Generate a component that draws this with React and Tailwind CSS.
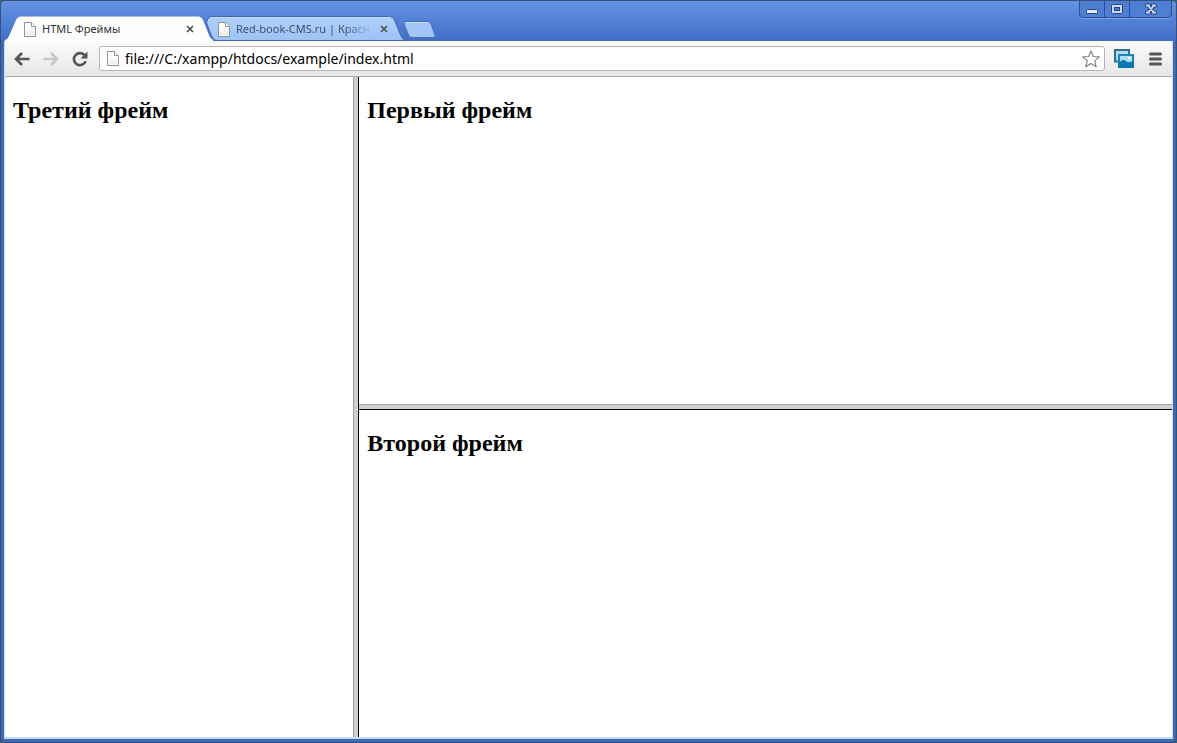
import React from "react";

function PageIcon({ className = "" }) {
  return (
    <svg className={"h-[15px] w-[12px] shrink-0 " + className} viewBox="0 0 12 15" aria-hidden="true">
      <path d="M.5 .5H7.500L11.500 4.500V14.500H.5Z" fill="#fafafa" stroke="#939393" />
      <path d="M7.500 .5V4.500H11.500" fill="#fff" stroke="#939393" />
      <path d="M2 9H10V13H2Z" fill="#efefef" />
    </svg>
  );
}

function CloseIcon() {
  return (
    <svg className="size-[8px]" viewBox="0 0 8 8" aria-hidden="true">
      <path d="M1 1L7 7M7 1L1 7" stroke="#4a4d52" strokeWidth="1.700" />
    </svg>
  );
}

function ActiveTabShape() {
  return (
    <svg className="absolute inset-0 h-full w-full" viewBox="0 0 208 25" preserveAspectRatio="none" aria-hidden="true">
      <path d="M0 25V24Q3 23 4 20L11 4Q12.500 .5 16 .5H193Q196.500 .5 198 4L204 19Q205.500 23 208 24V25Z" fill="#fdfdfe" />
    </svg>
  );
}

function IdleTabShape() {
  return (
    <svg className="absolute inset-0 h-full w-full" viewBox="0 0 204 25" preserveAspectRatio="none" aria-hidden="true">
      <defs>
        <linearGradient id="idleTab" x1="0" y1="0" x2="0" y2="1">
          <stop offset="0" stopColor="#b1d1fb" />
          <stop offset="1" stopColor="#9cc2f4" />
        </linearGradient>
      </defs>
      <path
        d="M9 .5H186Q190 .5 191.500 4L197.500 19Q199.500 24 203 24.500H13Q10 24 8.500 20L3.500 6.500Q5 .5 9 .5Z"
        fill="url(#idleTab)"
        stroke="#4168ae"
      />
      <path d="M8 1.500H188" stroke="#c4dcfc" />
    </svg>
  );
}

function Tab({ title, active }) {
  return (
    <div className={active ? "relative z-10 h-[25px] w-[208px]" : "relative -ml-[10px] h-[25px] w-[204px]"}>
      {active ? <ActiveTabShape /> : <IdleTabShape />}
      <div className={active ? "relative flex h-full items-center pt-px pr-[19px] pl-[19px]" : "relative flex h-full items-center pt-px pr-[19px] pl-[15px]"}>
        <PageIcon />
        <span
          className={
            active
              ? "ml-[6px] flex-1 whitespace-nowrap text-[11px] leading-[16px] text-[#333]"
              : "ml-[6px] flex-1 whitespace-nowrap text-[11px] leading-[16px] text-[#3c4f73] [mask-image:linear-gradient(to_right,#000_80%,transparent)]"
          }
        >
          {title}
        </span>
        <button type="button" aria-label={"Закрыть " + title} className="ml-[8px] flex items-center">
          <CloseIcon />
        </button>
      </div>
    </div>
  );
}

function WindowControls() {
  return (
    <div className="flex h-[17px] rounded-b-[4px] border border-t-0 border-[#2c4f94] bg-[#4f7fd3] shadow-[0_1px_0_#7ea4e6]">
      <button type="button" aria-label="Свернуть" className="flex w-[25px] items-center justify-center border-r border-[#2c4f94]">
        <svg className="h-[12px] w-[14px]" viewBox="0 0 14 12" aria-hidden="true">
          <rect x="1.500" y="6.500" width="11" height="4" rx="1" fill="#dfe9fb" stroke="#29457f" />
        </svg>
      </button>
      <button type="button" aria-label="Развернуть" className="flex w-[25px] items-center justify-center border-r border-[#2c4f94]">
        <svg className="h-[12px] w-[14px]" viewBox="0 0 14 12" aria-hidden="true">
          <rect x="1.500" y="1.500" width="11" height="9" rx="1" fill="#c9daf8" stroke="#29457f" />
          <rect x="4.500" y="4.500" width="5" height="3" fill="#4f7fd3" stroke="#29457f" />
        </svg>
      </button>
      <button type="button" aria-label="Закрыть окно" className="flex w-[41px] items-center justify-center">
        <svg className="h-[12px] w-[14px]" viewBox="0 0 14 12" aria-hidden="true">
          <path d="M4 2.500L10 9.500M10 2.500L4 9.500M3 2.500H5M9 2.500H11M3 9.500H5M9 9.500H11" stroke="#29457f" strokeWidth="3.600" strokeLinecap="square" />
          <path d="M4 2.500L10 9.500M10 2.500L4 9.500M3 2.500H5M9 2.500H11M3 9.500H5M9 9.500H11" stroke="#c9daf8" strokeWidth="1.800" strokeLinecap="square" />
        </svg>
      </button>
    </div>
  );
}

function Toolbar() {
  return (
    <div className="flex h-[36px] shrink-0 items-center border-b border-[#adadad] bg-linear-to-b from-[#fbfbfb] to-[#e6e6e6] pr-[9px] pl-[9px]">
      <button type="button" aria-label="Назад">
        <svg className="h-[16px] w-[16px]" viewBox="0 0 16 16" fill="none" stroke="#555" strokeWidth="2.600" aria-hidden="true">
          <path d="M15.500 8H2M8 2L2 8L8 14" />
        </svg>
      </button>
      <button type="button" aria-label="Вперёд" className="ml-[13px]">
        <svg className="h-[16px] w-[16px]" viewBox="0 0 16 16" fill="none" stroke="#c6c6c6" strokeWidth="2.600" aria-hidden="true">
          <path d="M.5 8H14M8 2L14 8L8 14" />
        </svg>
      </button>
      <button type="button" aria-label="Обновить" className="ml-[13px]">
        <svg className="h-[16px] w-[16px]" viewBox="0 0 16 16" fill="none" aria-hidden="true">
          <path d="M12.800 4.600A6 6 0 1 0 13.600 10.200" stroke="#555" strokeWidth="2.600" />
          <path d="M15.500 .5V7.500H8.500Z" fill="#555" />
        </svg>
      </button>
      <div className="ml-[11px] flex h-[25px] flex-1 items-center rounded-[3px] border border-[#b4b4b4] bg-white pr-[4px] pl-[7px]">
        <PageIcon />
        <input
          type="text"
          aria-label="Адрес"
          defaultValue="file:///C:/xampp/htdocs/example/index.html"
          className="ml-[6px] min-w-0 flex-1 bg-transparent text-[14px] leading-[20px] text-black outline-none"
        />
        <button type="button" aria-label="Добавить в закладки">
          <svg className="size-[18px]" viewBox="0 0 18 18" aria-hidden="true">
            <path d="M9 .9L11.300 6.500L17.300 6.900L12.700 10.800L14.200 16.800L9 13.500L3.800 16.800L5.300 10.800L.7 6.900L6.700 6.500Z" fill="#fff" stroke="#7d7d7d" strokeWidth="1.100" strokeLinejoin="round" />
          </svg>
        </button>
      </div>
      <button type="button" aria-label="Снимок экрана" className="ml-[9px]">
        <svg className="h-[20px] w-[20px]" viewBox="0 0 20 20" aria-hidden="true">
          <rect x="1" y="1" width="14" height="11.500" fill="#b9d9ea" stroke="#2b6f95" strokeWidth="2" />
          <rect x="4" y="5" width="16" height="14" fill="#1b86bd" />
          <rect x="6" y="7" width="12" height="7" fill="#aadcf4" />
          <path d="M4 13.500L6 13C8 10.500 10.500 10.500 12.500 12.500C14.500 14 16.500 12.500 18 12.500H20V19H4Z" fill="#0a76b2" />
          <circle cx="15.500" cy="9" r="1.300" fill="#fff" />
        </svg>
      </button>
      <button type="button" aria-label="Меню" className="ml-[14px]">
        <svg className="h-[14px] w-[15px]" viewBox="0 0 15 14" stroke="#555" strokeWidth="3" strokeLinecap="round" aria-hidden="true">
          <path d="M2.500 2H12.500M2.500 7H12.500M2.500 12H12.500" />
        </svg>
      </button>
    </div>
  );
}

function Frame({ title }) {
  return (
    <section className="min-h-0 min-w-0 overflow-hidden bg-white px-[8px] pt-[20px]">
      <h2 className="font-['Liberation_Serif',serif] text-[24px] leading-[27px] font-bold text-black">{title}</h2>
    </section>
  );
}

export default function App() {
  return (
    <div className="h-screen bg-[#3f5f70] font-['Noto_Sans','Open_Sans',sans-serif]">
      <div className="flex h-full flex-col overflow-hidden rounded-[5px] border border-[#34507f] bg-[#4069b4] px-[3px] pb-[3px]">
        <header className="-mx-[3px] flex h-[40px] shrink-0 items-end justify-between bg-linear-to-b from-[#6492e0] from-5% via-[#5584d8] via-40% to-[#416dc6] pr-[4px] pl-[4px]">
          <div className="flex items-end">
            <Tab title="HTML Фреймы" active />
            <Tab title="Red-book-CMS.ru | Красн" />
            <button type="button" aria-label="Новая вкладка" className="-ml-[4px] mb-[3px]">
              <svg className="h-[17px] w-[33px]" viewBox="0 0 33 17" aria-hidden="true">
                <path d="M3 .5H24Q27 .5 28 3L32 14Q33 16.500 30 16.500H9Q6.500 16.500 5.500 14L1 3Q0 .5 3 .5Z" fill="#a3c6f6" stroke="#4570b8" />
                <path d="M3 1.500H25" stroke="#c4dcfc" />
              </svg>
            </button>
          </div>
          <div className="self-start">
            <WindowControls />
          </div>
        </header>
        <div className="flex min-h-0 flex-1 flex-col border border-t-0 border-b-2 border-[#c4def8] bg-white">
          <Toolbar />
          <main className="grid min-h-0 flex-1 grid-cols-[3fr_6px_7fr]">
            <Frame title="Третий фрейм" />
            <div className="border-r border-l border-r-black border-l-[#a0a0a0] bg-[#d0d0d0]" />
            <div className="grid min-h-0 grid-rows-[1fr_6px_1fr]">
              <Frame title="Первый фрейм" />
              <div className="border-t border-b border-t-[#a0a0a0] border-b-black bg-[#d0d0d0]" />
              <Frame title="Второй фрейм" />
            </div>
          </main>
        </div>
      </div>
    </div>
  );
}
